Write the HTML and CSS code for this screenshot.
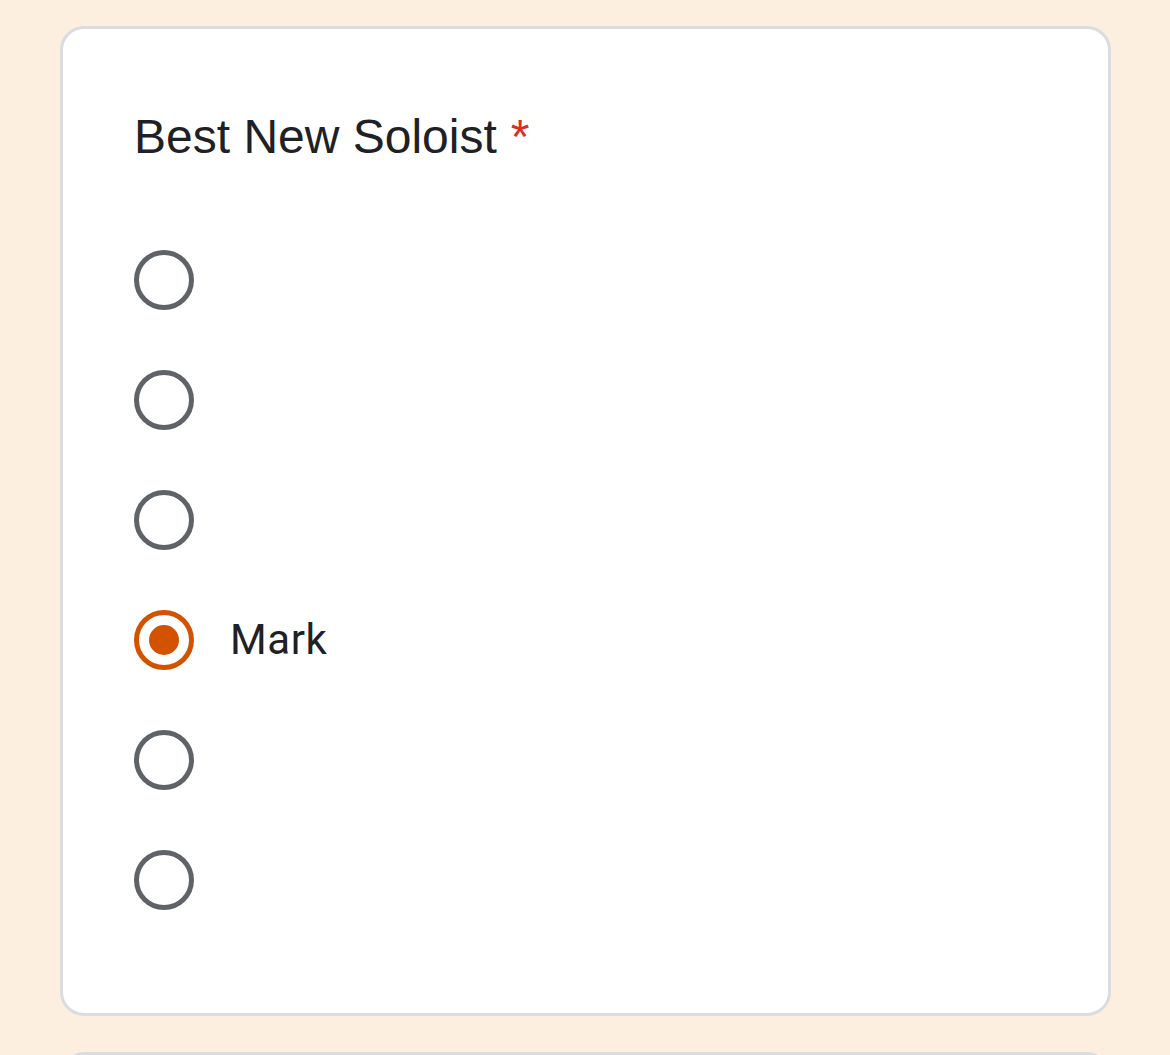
FILE: index.html
```html
<!DOCTYPE html>
<html lang="en">
<head>
<meta charset="utf-8">
<title>Best New Soloist</title>
<link rel="stylesheet" href="styles.css">
</head>
<body>
<main class="page">
  <section class="card">
    <div class="question-title">Best New Soloist<span class="required">*</span></div>
    <div class="options" role="radiogroup">
      <div class="option"><span class="radio"></span></div>
      <div class="option"><span class="radio"></span></div>
      <div class="option"><span class="radio"></span></div>
      <div class="option"><span class="radio checked"></span><span class="label">Mark</span></div>
      <div class="option"><span class="radio"></span></div>
      <div class="option"><span class="radio"></span></div>
    </div>
  </section>
  <section class="card card-next"></section>
</main>
</body>
</html>
```
FILE: styles.css
```css
html, body {
  margin: 0;
  padding: 0;
  background: #fcefdf;
}
body {
  font-family: Roboto, "Liberation Sans", Arial, sans-serif;
  color: #202124;
  overflow: hidden;
  height: 1055px;
}
.page {
  padding: 26px 59px 0 60px;
  display: flex;
  flex-direction: column;
  gap: 36px;
}
.card {
  background: #ffffff;
  border: 3px solid #dadce0;
  border-radius: 24px;
  padding: 72px 72px 73px 71px;
}
.question-title {
  font-family: "Liberation Sans", Arial, sans-serif;
  font-size: 48px;
  line-height: 72px;
  color: #202124;
}
.required {
  color: #d93025;
  padding-left: 14px;
}
.options {
  margin-top: 47px;
  display: flex;
  flex-direction: column;
}
.option {
  height: 120px;
  display: flex;
  align-items: center;
  gap: 36px;
}
.radio {
  box-sizing: border-box;
  width: 60px;
  height: 60px;
  border: 5.5px solid #5f6368;
  border-radius: 50%;
  display: flex;
  align-items: center;
  justify-content: center;
  flex: none;
}
.radio.checked {
  border-color: #d35200;
}
.radio.checked::after {
  content: "";
  width: 30px;
  height: 30px;
  border-radius: 50%;
  background: #d35200;
}
.label {
  font-size: 42px;
  letter-spacing: 0.6px;
  color: #202124;
  padding-bottom: 2px;
}
.card-next {
  height: 200px;
  padding: 0;
  flex: none;
}
```
